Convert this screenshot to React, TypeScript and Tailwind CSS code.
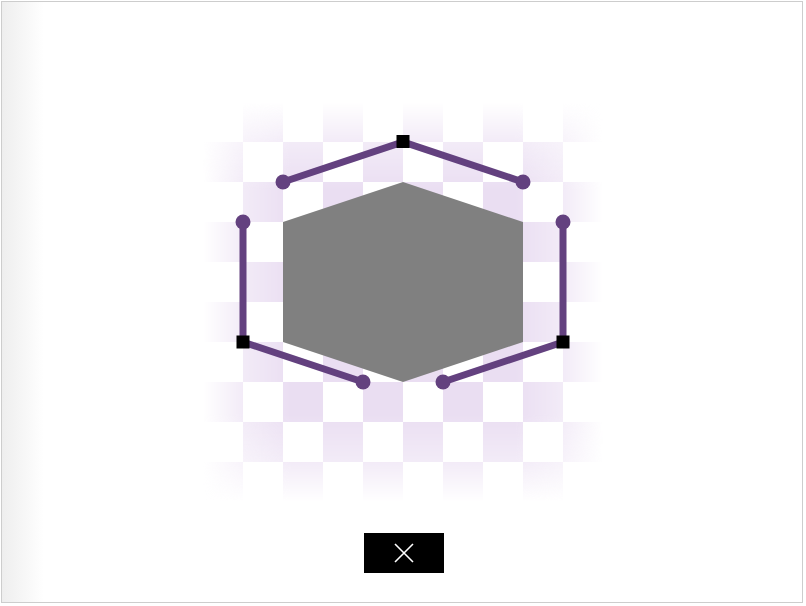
import React from "react";

const cells: { x: number; y: number }[] = [];
for (let r = 0; r < 10; r++) {
  for (let c = 0; c < 10; c++) {
    if ((r + c) % 2 === 1) cells.push({ x: c * 40, y: r * 40 });
  }
}

const PURPLE = "#63417f";

function Figure() {
  return (
    <svg width="400" height="400" viewBox="0 0 400 400" className="block">
      <defs>
        <linearGradient id="gx" x1="0" y1="0" x2="1" y2="0">
          <stop offset="0" stopColor="#000" />
          <stop offset="0.1" stopColor="#999" />
          <stop offset="0.22" stopColor="#fff" />
          <stop offset="0.78" stopColor="#fff" />
          <stop offset="0.9" stopColor="#999" />
          <stop offset="1" stopColor="#000" />
        </linearGradient>
        <linearGradient id="gy" x1="0" y1="0" x2="0" y2="1">
          <stop offset="0" stopColor="#000" />
          <stop offset="0.1" stopColor="#999" />
          <stop offset="0.22" stopColor="#fff" />
          <stop offset="0.78" stopColor="#fff" />
          <stop offset="0.9" stopColor="#999" />
          <stop offset="1" stopColor="#000" />
        </linearGradient>
        <mask id="mx" maskUnits="userSpaceOnUse" x="0" y="0" width="400" height="400">
          <rect x="0" y="0" width="400" height="400" fill="url(#gx)" />
        </mask>
        <mask id="my" maskUnits="userSpaceOnUse" x="0" y="0" width="400" height="400">
          <rect x="0" y="0" width="400" height="400" fill="url(#gy)" />
        </mask>
      </defs>
      <g mask="url(#mx)">
        <g mask="url(#my)">
          {cells.map((c, i) => (
            <rect key={i} x={c.x} y={c.y} width="40" height="40" fill="#eadef2" />
          ))}
        </g>
      </g>
      <polygon points="200,80 320,120 320,240 200,280 80,240 80,120" fill="#808080" />
      <g stroke={PURPLE} strokeWidth="7" fill="none">
        <polyline points="80,80 200,40 320,80" />
        <polyline points="40,120 40,240 160,280" />
        <polyline points="360,120 360,240 240,280" />
      </g>
      <g fill={PURPLE}>
        <circle cx="80" cy="80" r="7.5" />
        <circle cx="320" cy="80" r="7.5" />
        <circle cx="40" cy="120" r="7.5" />
        <circle cx="160" cy="280" r="7.5" />
        <circle cx="360" cy="120" r="7.5" />
        <circle cx="240" cy="280" r="7.5" />
      </g>
      <g fill="#000">
        <rect x="193.5" y="33" width="13" height="13" />
        <rect x="33.5" y="233.5" width="13" height="13" />
        <rect x="353.5" y="233.5" width="13" height="13" />
      </g>
    </svg>
  );
}

export default function App() {
  return (
    <div className="w-[806px] h-[606px] bg-white p-px" style={{ fontFamily: '"Liberation Sans", Arial, sans-serif' }}>
      <div className="w-[802px] h-[602px] border border-[#cdcdcd] flex flex-col bg-[linear-gradient(to_right,#eeeeee,#ffffff_42px)]">
        <div className="pt-[100px] pl-[201px]">
          <Figure />
        </div>
        <div className="mt-[31px] pl-[362px]">
          <button className="w-[80px] h-[40px] bg-black flex items-center justify-center" aria-label="Close">
            <svg width="20" height="20" viewBox="0 0 20 20">
              <path d="M1 1 L19 19 M19 1 L1 19" stroke="#ffffff" strokeWidth="1.6" fill="none" />
            </svg>
          </button>
        </div>
      </div>
    </div>
  );
}
